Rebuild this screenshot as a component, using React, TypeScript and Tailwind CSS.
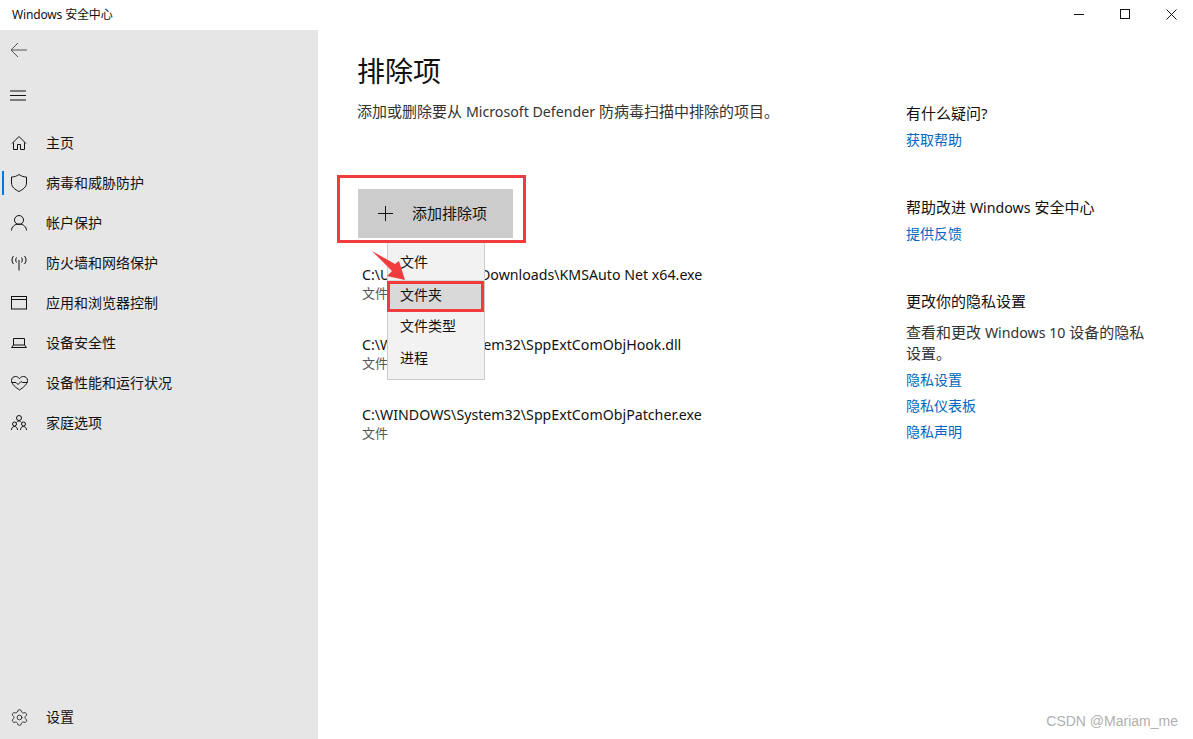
import React from "react";
import { Settings } from "lucide-react";

const font = { fontFamily: '"Noto Sans", "Noto Sans CJK SC", sans-serif' };

const s = { fill: "none", stroke: "#111", strokeWidth: 1 } as const;

const icons: Record<string, React.ReactNode> = {
  home: (
    <svg width="16" height="16" viewBox="0 0 16 16" {...s}>
      <path d="M1 8.500 8 1.500l7 7M2.500 7.500v7h4v-5h3v5h4v-7" />
    </svg>
  ),
  shield: (
    <svg width="16" height="18" viewBox="0 0 16 18" {...s}>
      <path d="M.5 3C3.500 3 6 2 8 .5 10 2 12.500 3 15.500 3v6c0 4-3.500 6.500-7.500 8.500C4 15.500.5 13 .5 9z" />
    </svg>
  ),
  user: (
    <svg width="16" height="16" viewBox="0 0 16 16" {...s}>
      <circle cx="8" cy="5" r="4.500" />
      <path d="M.5 15.500c0-3.500 3-6.500 7.500-6.500s7.500 3 7.500 6.500" />
    </svg>
  ),
  wifi: (
    <svg width="16" height="16" viewBox="0 0 16 16" {...s}>
      <path d="M8 5v10.500M5.500 2.500C4.500 4 4.500 6 5.500 7.500M10.500 2.500c1 1.500 1 3.500 0 5M2.500 1C.5 3.500.5 6.500 2.500 9M13.500 1c2 2.500 2 5.500 0 8" />
    </svg>
  ),
  window: (
    <svg width="16" height="14" viewBox="0 0 16 14" {...s}>
      <rect x=".5" y=".5" width="15" height="12.500" />
      <path d="M.5 3.500h15" />
    </svg>
  ),
  laptop: (
    <svg width="16" height="12" viewBox="0 0 16 12" {...s}>
      <path d="M2.500 8V1.500h11V8M.5 10.500h15L13.500 8h-11z" />
    </svg>
  ),
  heart: (
    <svg width="17" height="15" viewBox="0 0 17 15" {...s}>
      <path d="M8.500 14C5 11.500.5 8.500.5 4.500.5 2 2.500.5 4.500.5c1.700 0 3 .8 4 2.200 1-1.400 2.300-2.200 4-2.200 2 0 4 1.500 4 4 0 4-4.500 7-8 9.500z" />
      <path d="M.8 6.500h4.200l2 2 3-3 1.500 1h4.700" />
    </svg>
  ),
  family: (
    <svg width="16" height="16" viewBox="0 0 16 16" {...s}>
      <circle cx="8" cy="3" r="2.500" />
      <circle cx="3.500" cy="9" r="2" />
      <circle cx="12.500" cy="9" r="2" />
      <path d="M.5 15c0-2 1.200-3.500 3-3.500s3 1.500 3 3.500M9.500 15c0-2 1.200-3.500 3-3.500s3 1.500 3 3.500M5.500 7.500c.5-1 1.500-1.500 2.500-1.500s2 .5 2.500 1.500" />
    </svg>
  ),
  gear: <Settings size={19} strokeWidth={1} color="#111" />,
};

const nav = [
  ["home", "主页"],
  ["shield", "病毒和威胁防护"],
  ["user", "帐户保护"],
  ["wifi", "防火墙和网络保护"],
  ["window", "应用和浏览器控制"],
  ["laptop", "设备安全性"],
  ["heart", "设备性能和运行状况"],
  ["family", "家庭选项"],
];

function NavItem({ icon, label, active }: { icon: string; label: string; active?: boolean }) {
  return (
    <div className="relative flex h-10 items-center text-[14px] leading-5 text-[#111]">
      {active && <span className="absolute left-[2px] top-[8px] h-6 w-[2px] bg-[#0078d7]" />}
      <span className="flex w-[46px] justify-center pr-[8px]">{icons[icon]}</span>
      <span>{label}</span>
    </div>
  );
}

function Exclusion({ path }: { path: string }) {
  return (
    <div className="h-[70px] pl-[5px]">
      <div className="pt-[2px] text-[14.2px] leading-5 text-[#111]">{path}</div>
      <div className="text-[13px] leading-4 text-[#555]">文件</div>
    </div>
  );
}

function Link({ children }: { children: React.ReactNode }) {
  return <div className="h-[26px] text-[14px] leading-[26px] text-[#0067c0]">{children}</div>;
}

function Heading({ children }: { children: React.ReactNode }) {
  return <div className="h-[26px] text-[15px] leading-[24px] text-[#111]">{children}</div>;
}

function Latin({ children }: { children: React.ReactNode }) {
  return <span className="text-[14.2px]">{children}</span>;
}

export default function App() {
  return (
    <div className="relative flex h-[739px] w-[1193px] flex-col overflow-hidden bg-white" style={font}>
      <header className="flex h-[30px] shrink-0 items-center justify-between">
        <div className="pl-3 text-[12px] tracking-[-0.15px] text-[#111]">Windows 安全中心</div>
        <div className="-mr-[1px] flex h-full items-center pb-[2px]">
          <span className="flex w-[46px] justify-center">
            <svg width="10" height="10" viewBox="0 0 10 10" stroke="#111" fill="none"><path d="M0 5.500h10" /></svg>
          </span>
          <span className="flex w-[46px] justify-center">
            <svg width="10" height="10" viewBox="0 0 10 10" stroke="#111" fill="none"><rect x=".5" y=".5" width="9" height="9" /></svg>
          </span>
          <span className="flex w-[46px] justify-center">
            <svg width="11" height="11" viewBox="0 0 11 11" stroke="#111" fill="none"><path d="M.5.500l10 10M10.500.500l-10 10" /></svg>
          </span>
        </div>
      </header>

      <div className="flex min-h-0 flex-1">
        <aside className="flex w-[318px] shrink-0 flex-col bg-[#e6e6e6]">
          <div className="flex h-10 items-center pl-[10px]">
            <svg width="17" height="16" viewBox="0 0 17 16" fill="none" stroke="#555" strokeWidth="1">
              <path d="M17 8H1M8 1 1 8l7 7" />
            </svg>
          </div>
          <div className="flex h-[50px] items-center pl-[10px]">
            <svg width="16" height="11" viewBox="0 0 16 11" fill="none" stroke="#111" strokeWidth="1">
              <path d="M0 1h16M0 5.500h16M0 10h16" />
            </svg>
          </div>
          <nav className="mt-[3px] flex flex-col">
            {nav.map(([icon, label], i) => (
              <NavItem key={label} icon={icon} label={label} active={i === 1} />
            ))}
          </nav>
          <div className="mt-auto pb-[2px]">
            <NavItem icon="gear" label="设置" />
          </div>
        </aside>

        <main className="flex min-w-0 flex-1">
          <section className="w-[548px] shrink-0 pl-[39px] pt-[19px]">
            <h1 className="text-[28px] font-normal leading-[44px] text-[#111]">排除项</h1>
            <p className="mt-[8px] text-[15px] leading-5 text-[#333]">
              添加或删除要从 <Latin>Microsoft Defender</Latin> 防病毒扫描中排除的项目。
            </p>
            <button className="ml-px mt-[67px] flex h-[49px] w-[155px] items-center bg-[#cccccc] text-[15px] text-[#111]">
              <svg className="ml-[20px]" width="15" height="15" viewBox="0 0 15 15" stroke="#111" fill="none">
                <path d="M7.500 0v15M0 7.500h15" />
              </svg>
              <span className="ml-[19px]">添加排除项</span>
            </button>
            <div className="mt-[25px]">
              <Exclusion path="C:\Users\Mariam\Downloads\KMSAuto Net x64.exe" />
              <Exclusion path="C:\WINDOWS\System32\SppExtComObjHook.dll" />
              <Exclusion path="C:\WINDOWS\System32\SppExtComObjPatcher.exe" />
            </div>
          </section>

          <section className="w-[245px] shrink-0 pl-10 pt-[71px]">
            <Heading>有什么疑问?</Heading>
            <Link>获取帮助</Link>
            <div className="mt-[42px]">
              <Heading>帮助改进 <Latin>Windows</Latin> 安全中心</Heading>
              <Link>提供反馈</Link>
            </div>
            <div className="mt-[42px]">
              <Heading>更改你的隐私设置</Heading>
              <p className="mt-[7px] w-[245px] text-[15px] leading-5 text-[#333]">查看和更改 <Latin>Windows 10</Latin> 设备的隐私设置。</p>
              <div className="mt-[4px]">
                <Link>隐私设置</Link>
                <Link>隐私仪表板</Link>
                <Link>隐私声明</Link>
              </div>
            </div>
          </section>
        </main>
      </div>

      {/* dropdown menu */}
      <div className="absolute left-[387px] top-[243px] flex h-[137px] w-[98px] flex-col border border-t-0 border-[#cccccc] bg-[#f2f2f2] pt-[1px] text-[14px] text-[#111]">
        <div className="flex h-[36px] items-center pb-[2px] pl-[12px]">文件</div>
        <div className="flex h-[30px] items-center bg-[#d9d9d9] pb-[2px] pl-[12px]">文件夹</div>
        <div className="flex h-[30px] items-center pl-[12px]">文件类型</div>
        <div className="flex h-[34px] items-center pl-[12px]">进程</div>
      </div>

      {/* annotations */}
      <div className="absolute left-[337px] top-[175px] h-[68px] w-[189px] border-[3px] border-[#f03c3c]" />
      <div className="absolute left-[387px] top-[281px] h-[31px] w-[97px] border-[3px] border-[#f03c3c]" />
      <svg className="absolute left-[370px] top-[249px]" width="38" height="34" viewBox="0 0 38 34">
        <path d="M2 2 25 15l4-3 6 19-18-4 5-5z" fill="#f03c3c" />
      </svg>

      <div className="absolute bottom-[7px] right-[15px] text-[14px] text-[#b0b0b0]" style={{ fontFamily: '"Liberation Sans", sans-serif' }}>
        CSDN @Mariam_me
      </div>
    </div>
  );
}
